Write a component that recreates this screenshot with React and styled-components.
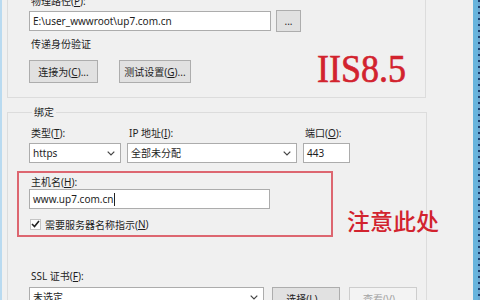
import React from "react";
import styled, { createGlobalStyle } from "styled-components";

const Global = createGlobalStyle`
  html, body {
    margin: 0;
    padding: 0;
    background: #f0f0f0;
    overflow: hidden;
  }
  body {
    font-family: "Noto Sans", "Noto Sans CJK SC", sans-serif;
    font-size: 10px;
    color: #1e1e1e;
  }
`;

const Frame = styled.div`
  display: flex;
  width: 480px;
  height: 300px;
  overflow: hidden;
  border-left: 2px solid #b9daf0;
  box-sizing: border-box;
`;

const Content = styled.div`
  flex: 1;
  padding-left: 5px;
  display: flex;
  flex-direction: column;
`;

const BlueEdge = styled.div`
  width: 5px;
  background: #67b4dd;
`;

const DarkEdge = styled.div`
  width: 2px;
  background: repeating-linear-gradient(#1b3f70 0 2px, #6aa6cf 2px 6px);
`;

const TopGroup = styled.div`
  width: 419px;
  box-sizing: border-box;
  margin-top: -20px;
  padding: 13px 0 14px 21px;
  border: 1px solid #dcdcdc;
`;

const Label = styled.div`
  line-height: 14px;
  height: 14px;
  padding-left: 2px;
  white-space: nowrap;
  margin-top: ${({ $top }) => $top || 0}px;
`;

const Row = styled.div`
  display: flex;
  align-items: ${({ $align }) => $align || "center"};
  margin-top: ${({ $top }) => $top || 0}px;
`;

const TextBox = styled.div`
  width: ${({ $w }) => $w}px;
  height: 20px;
  box-sizing: border-box;
  border: 1px solid #acacac;
  background: #fff;
  padding-left: 3px;
  line-height: 18px;
  white-space: nowrap;
  display: flex;
  align-items: center;
`;

const Caret = styled.span`
  display: inline-block;
  width: 1px;
  height: 13px;
  background: #222;
  margin-left: 1px;
`;

const Button = styled.div`
  width: ${({ $w }) => $w}px;
  height: ${({ $h }) => $h || 23}px;
  box-sizing: border-box;
  margin-left: ${({ $ml }) => $ml || 0}px;
  border: 1px solid ${({ $disabled }) => ($disabled ? "#cdcdcd" : "#adadad")};
  background: ${({ $disabled }) => ($disabled ? "#f3f3f3" : "#e1e1e1")};
  color: ${({ $disabled }) => ($disabled ? "#a3a3a3" : "#1e1e1e")};
  display: flex;
  align-items: center;
  justify-content: center;
  white-space: nowrap;
`;

const Brand = styled.div`
  margin-left: 126px;
  font-family: "Liberation Serif", serif;
  font-size: 36px;
  line-height: 23px;
  color: #d2232e;
  transform: scaleY(1.12);
  margin-top: -4px;
  -webkit-text-stroke: 0.6px #d2232e;
  white-space: nowrap;
`;

const Binding = styled.fieldset`
  width: 420px;
  box-sizing: border-box;
  margin: 7px 0 0 0;
  padding: 0 0 20px 9px;
  border: 1px solid #dcdcdc;
  min-width: 0;
`;

const Legend = styled.legend`
  padding: 0 2px;
  margin-left: 15px;
  line-height: 14px;
`;

const Inner = styled.div`
  padding-left: 12px;
`;

const FieldGrid = styled.div`
  display: grid;
  grid-template-columns: 92px 170px 47px;
  column-gap: 6px;
  row-gap: 3px;
  margin-top: 7px;
`;

const SelectBox = styled(TextBox)`
  justify-content: space-between;
  padding-right: 5px;
`;

const HostArea = styled.div`
  display: flex;
  align-items: flex-end;
  margin-top: 8px;
`;

const RedBox = styled.div`
  width: 316px;
  flex-shrink: 0;
  box-sizing: border-box;
  border: 2px solid #dd6670;
  padding: 2px 0 4px 10px;
`;

const Note = styled.div`
  flex-shrink: 0;
  margin: 0 0 3px 14px;
  font-family: "Noto Sans CJK SC", sans-serif;
  font-size: 23px;
  line-height: 28px;
  color: #d2232e;
  font-weight: 500;
  white-space: nowrap;
`;

const CheckRow = styled.div`
  display: flex;
  align-items: center;
  height: 14px;
  margin-top: 8px;
  padding-left: 1px;
`;

const CheckBox = styled.div`
  width: 11px;
  height: 11px;
  box-sizing: border-box;
  border: 1px solid #c4c4c4;
  background: #fff;
  margin-right: 4px;
  display: flex;
  align-items: center;
  justify-content: center;
`;

function Chevron() {
  return (
    <svg width="8" height="5" viewBox="0 0 8 5">
      <path d="M0.7 0.7 L4 4 L7.3 0.7" fill="none" stroke="#444" strokeWidth="1.2" />
    </svg>
  );
}

function Select({ w, children }) {
  return (
    <SelectBox $w={w}>
      <span>{children}</span>
      <Chevron />
    </SelectBox>
  );
}

export default function App() {
  return (
    <>
      <Global />
      <Frame>
        <Content>
          <TopGroup>
            <Label>
              物理路径(<u>P</u>):
            </Label>
            <Row $top={2}>
              <TextBox $w={242}>E:\user_wwwroot\up7.com.cn</TextBox>
              <Button $w={25} $h={22} $ml={5}>
                ...
              </Button>
            </Row>
            <Label $top={5}>传递身份验证</Label>
            <Row $top={9}>
              <Button $w={69}>
                连接为(<u>C</u>)...
              </Button>
              <Button $w={72} $ml={21}>
                测试设置(<u>G</u>)...
              </Button>
              <Brand>IIS8.5</Brand>
            </Row>
          </TopGroup>

          <Binding>
            <Legend>绑定</Legend>
            <Inner>
              <FieldGrid>
                <Label>
                  类型(<u>T</u>):
                </Label>
                <Label>
                  IP 地址(<u>I</u>):
                </Label>
                <Label>
                  端口(<u>O</u>):
                </Label>
                <Select w={92}>https</Select>
                <Select w={170}>全部未分配</Select>
                <TextBox $w={47}>443</TextBox>
              </FieldGrid>
            </Inner>

            <HostArea>
              <RedBox>
                <Label>
                  主机名(<u>H</u>):
                </Label>
                <TextBox $w={241}>
                  www.up7.com.cn
                  <Caret />
                </TextBox>
                <CheckRow>
                  <CheckBox>
                    <svg width="9" height="8" viewBox="0 0 9 8">
                      <path d="M1 4 L3.5 6.5 L8 1" fill="none" stroke="#222" strokeWidth="1.6" />
                    </svg>
                  </CheckBox>
                  需要服务器名称指示(<u>N</u>)
                </CheckRow>
              </RedBox>
              <Note>注意此处</Note>
            </HostArea>

            <Inner>
              <Label $top={32}>
                SSL 证书(<u>F</u>):
              </Label>
              <Row $top={4} $align="flex-start">
                <Select w={235}>未选定</Select>
                <Button $w={68} $ml={8}>
                  选择(<u>L</u>)...
                </Button>
                <Button $w={68} $ml={9} $disabled>
                  查看(<u>V</u>)...
                </Button>
              </Row>
            </Inner>
          </Binding>
        </Content>
        <BlueEdge />
        <DarkEdge />
      </Frame>
    </>
  );
}
